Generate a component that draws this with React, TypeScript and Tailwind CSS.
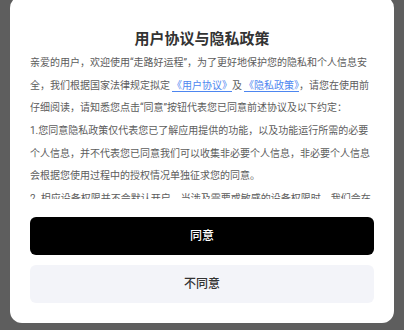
import React from "react";

const FONT = { fontFamily: "Roboto, 'Noto Sans CJK SC', sans-serif" };

function PolicyText() {
  return (
    <div className="mt-[2px] h-[147px] overflow-hidden text-[10px] leading-[22.67px] text-[#5c5c5c]">
      <p>
        亲爱的用户，欢迎使用“走路好运程”，为了更好地保护您的隐私和个人信息安全，我们根据国家法律规定拟定
        <a href="#" className="ml-[2px] text-[#4d86f0] underline underline-offset-2">
          《用户协议》
        </a>
        及
        <a href="#" className="ml-[2px] text-[#4d86f0] underline underline-offset-2">
          《隐私政策》
        </a>
        ，请您在使用前仔细阅读，请知悉您点击“同意”按钮代表您已同意前述协议及以下约定：
      </p>
      <p>
        1.您同意隐私政策仅代表您已了解应用提供的功能，以及功能运行所需的必要个人信息，并不代表您已同意我们可以收集非必要个人信息，非必要个人信息会根据您使用过程中的授权情况单独征求您的同意。
      </p>
      <p>
        2. 相应设备权限并不会默认开启，当涉及需要或敏感的设备权限时，我们会在您使用到相应业务功能时，另行弹窗再次征得您的同意后开启；权限开启后，您还可以随时通过设备设置关闭权限。
      </p>
    </div>
  );
}

export default function App() {
  return (
    <div className="h-[330px] w-[404px] overflow-hidden bg-[#5e5e5e]" style={FONT}>
      <div className="mx-[10px] mt-[-4px] flex flex-col rounded-xl bg-white px-[20px] pb-[20px] pt-[32px]">
        <h2 className="text-center text-[15px] font-semibold leading-[22px] text-[#333]">
          用户协议与隐私政策
        </h2>

        <PolicyText />

        {/* Actions */}
        <div className="mt-[18px] flex flex-col gap-[10px]">
          <button className="h-[38px] w-full rounded-md bg-black text-xs font-medium text-white">
            同意
          </button>
          <button className="h-[38px] w-full rounded-md bg-[#f3f4f9] text-xs font-medium text-[#333]">
            不同意
          </button>
        </div>
      </div>
    </div>
  );
}
